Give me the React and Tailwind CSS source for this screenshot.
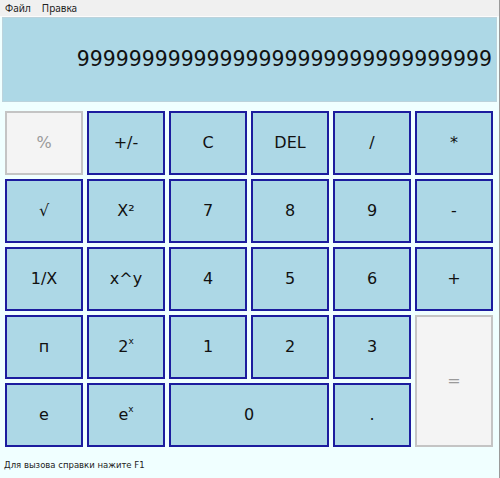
import React from "react";

const btn = "flex items-center justify-center border-2 border-[#1c1c9e] bg-[#add8e6] text-[16px] text-[#111]";
const dis = "flex items-center justify-center border-2 border-[#c4c4c4] bg-[#f4f4f4] text-[16px] text-[#9a9a9a]";

export default function App() {
  const f = { fontFamily: '"DejaVu Sans", Verdana, sans-serif' };
  const nines = "9".repeat(32);
  return (
    <div className="w-[500px] h-[478px] bg-[#f0ffff] flex flex-col overflow-hidden border-r border-[#9a9a9a]" style={f}>
      <div className="h-[16px] bg-[#f0f0f0] flex items-center gap-[11px] pl-[5px] text-[10px] text-[#222]" style={{ fontFamily: '"Noto Sans", "Open Sans", sans-serif' }}>
        <span>Файл</span>
        <span>Правка</span>
      </div>
      <div className="h-[1px] bg-[#fbfbfb]" />
      <div className="ml-[2px] w-[495px] h-[85px] bg-[#add8e6] border border-[#bcd3dc] flex items-center justify-end pr-[4px] text-[20.4px] text-[#111] whitespace-nowrap">
        {nines}
      </div>
      <div className="mt-[9px] ml-[5px] w-[488px] grid grid-cols-6 grid-rows-[repeat(5,64px)] gap-[4px]">
        <div className={dis}>%</div>
        <div className={btn}>+/-</div>
        <div className={btn}>C</div>
        <div className={btn}>DEL</div>
        <div className={btn}>/</div>
        <div className={btn}>*</div>

        <div className={btn}>√</div>
        <div className={btn}>X²</div>
        <div className={btn}>7</div>
        <div className={btn}>8</div>
        <div className={btn}>9</div>
        <div className={btn}>-</div>

        <div className={btn}>1/X</div>
        <div className={btn}>x^y</div>
        <div className={btn}>4</div>
        <div className={btn}>5</div>
        <div className={btn}>6</div>
        <div className={btn}>+</div>

        <div className={btn}>п</div>
        <div className={btn}>2<sup className="text-[9px] -mt-[4px]">x</sup></div>
        <div className={btn}>1</div>
        <div className={btn}>2</div>
        <div className={btn}>3</div>
        <div className={`${dis} row-span-2`}>=</div>

        <div className={btn}>e</div>
        <div className={btn}>e<sup className="text-[9px] -mt-[4px]">x</sup></div>
        <div className={`${btn} col-span-2`}>0</div>
        <div className={btn}>.</div>
      </div>
      <div className="mt-[12px] ml-[4px] text-[8.5px] text-[#222]">Для вызова справки нажите F1</div>
    </div>
  );
}
